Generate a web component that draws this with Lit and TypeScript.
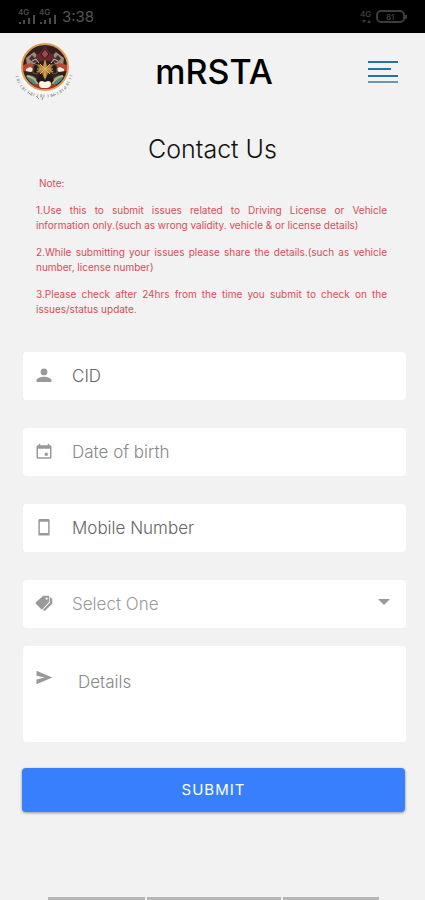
import { LitElement, html, css, svg } from "lit";
import { customElement } from "lit/decorators.js";

const person = svg`<path d="M12 11a4.500 4.500 0 1 0 0-9 4.500 4.500 0 0 0 0 9zm0 2c-3.500 0-10 1.600-10 5V20h20v-2c0-3.400-6.500-5-10-5z"/>`;
const calendar = svg`<path d="M17 1v2H7V1H5v2H4a2 2 0 0 0-2 2v14a2 2 0 0 0 2 2h16a2 2 0 0 0 2-2V5a2 2 0 0 0-2-2h-1V1zM4 7.500h16V19H4zM13 13v4h4v-4z" fill-rule="evenodd"/>`;
const phone = svg`<path d="M6 0h12a1.500 1.500 0 0 1 1.500 1.500v19A1.500 1.500 0 0 1 18 22H6a1.500 1.500 0 0 1-1.500-1.500v-19A1.500 1.500 0 0 1 6 0zm.500 3.500v15h11v-15z" fill-rule="evenodd"/>`;
const tags = svg`<path d="M11 1h6.500A1.500 1.500 0 0 1 19 2.500V9l-8.500 9.300a2 2 0 0 1-2.800 0L1.400 12a2 2 0 0 1 0-2.800zM15.500 3.200a1.500 1.500 0 1 0 0 3 1.500 1.500 0 0 0 0-3z" fill-rule="evenodd"/><path d="M20 3l3 2v6.500L13 21.300l-2.500-1.300L20 10z"/>`;
const send = svg`<path d="M2 1l21 9-21 9v-6.500l11-2.500L2 7.500z"/>`;

const icon = (shape: unknown) => html`<svg class="icon" viewBox="0 0 24 24" aria-hidden="true">${shape}</svg>`;

const signal = html`<svg class="signal" viewBox="0 0 19 18" aria-hidden="true">
  <text x="0" y="7">4G</text>
  <path d="M1 14h2v2H1zM5 12h2v4H5zM10 10h2v6h-2zM15 7h2v9h-2z" />
</svg>`;

const emblem = html`<svg class="emblem" viewBox="0 0 60 60" role="img" aria-label="Emblem">
  <path d="M3 34Q8 54 30 54T57 33" fill="none" stroke="#b4b4b2" stroke-width="3" stroke-dasharray="1 2 2 1 1 3" />
  <path d="M22 54l3 3m4-2l-1 3m-14-8l3 3m21 1l4-2m8-6l2 1" stroke="#999" />
  <circle cx="31" cy="27" r="25" fill="#fafafa" />
  <circle cx="31" cy="25" r="23" fill="#30211f" stroke="#df9a55" stroke-width="2" />
  <path d="M12 16l8-6 5 5-4 7-8 2zM50 16l-8-6-5 5 4 7 8 2z" fill="#a08a78" />
  <path d="M15 17l3-4 3 3 2-3 1 5-4 3zM47 17l-3-4-3 3-2-3-1 5 4 3z" fill="#443238" />
  <path d="M18 19l4-2 3 4M44 19l-4-2-3 4" fill="none" stroke="#d7c0a4" />
  <path d="M31 4l5 7 4 2-3 6H25l-3-6 4-2z" fill="#68282d" />
  <path d="M27 12l4-5 4 5-4 5z" fill="#a44743" stroke="#241b23" />
  <path d="M9 23l8-2 5 4-4 5-9-1zM53 23l-8-2-5 4 4 5 9-1z" fill="#b94734" />
  <path d="M12 27l4-2 4 2-3 3-5-1zM50 27l-4-2-4 2 3 3 5-1z" fill="#f1e7da" />
  <path d="M19 24l3-2 4 5-3 5-4-1zM43 24l-3-2-4 5 3 5 4-1z" fill="#211c1c" stroke="#765335" />
  <path d="M12 34q8-3 14 7l-2 3q-8-2-12-10zM50 34q-8-3-14 7l2 3q8-2 12-10z" fill="#4c8987" />
  <path d="M13 34q7 1 11 8M49 34q-7 1-11 8" fill="none" stroke="#c9b473" stroke-width="2" />
  <path d="M14 38q5 9 17 9t17-9q-2 6-9 4l-8-3-8 3q-7 2-9-4z" fill="#a7332a" />
  <path d="M22 38l5-6 4 3 4-3 5 6-3 4H25z" fill="#251716" />
  <path d="M31 17l2 7 6-2-3 5 4 3-6 1-3 7-3-7-6-1 4-3-3-5 6 2z" fill="#b78338" />
  <path d="M31 19v17M23 27h16M26 22l10 10M36 22L26 32" stroke="#dfb55c" />
  <path d="M25 42q0-3 3-3l3 1 3-1q3 0 3 3t-4 4h-4q-4 0-4-4z" fill="#fff8e7" />
</svg>`;

@customElement("app-root")
export class AppRoot extends LitElement {
  static styles = css`
    :host {
      display: flex;
      flex-direction: column;
      min-height: 100vh;
      background: #f2f2f2;
      color: #111;
      font-family: Inter, "Liberation Sans", sans-serif;
    }
    * { box-sizing: border-box; }
    .status {
      display: flex;
      align-items: center;
      height: 33px;
      padding: 0 16px 0 18px;
      background: #000;
      color: #555;
      font-size: 15px;
    }
    .signal { width: 19px; height: 18px; margin-right: 2px; fill: #4b4b4b; }
    .signal text { font-size: 8px; font-weight: 600; }
    .time { flex: 1; margin-left: 2px; }
    .power { width: 50px; height: 18px; fill: #3c3c3c; }
    .power text { font-size: 8px; font-weight: 600; }
    .top {
      display: grid;
      grid-template-columns: 60px 1fr 58px;
      align-items: center;
      height: 78px;
      padding: 0 13px 0 14px;
    }
    .emblem { width: 60px; height: 60px; }
    h1 { margin: 0; text-align: center; font-size: 34px; font-weight: 500; line-height: 44px; color: #000; }
    .menu { justify-self: center; padding: 0; border: 0; background: none; line-height: 0; }
    .menu svg { width: 30px; height: 24px; }
    h2 { margin: 22px 0 11px; text-align: center; font-size: 25px; font-weight: 300; line-height: 32px; color: #111; }
    .notes {
      display: flex;
      flex-direction: column;
      gap: 12px;
      margin: 0 38px 0 36px;
      color: #d94c56;
      font-size: 10px;
      line-height: 15px;
      text-align: justify;
    }
    .notes p { margin: 0; }
    .notes .lead { padding-left: 3px; }
    form { display: flex; flex-direction: column; gap: 28px; margin: 35px 19px 0 23px; }
    .field {
      display: flex;
      align-items: center;
      height: 48px;
      padding: 0 14px 0 12px;
      border-radius: 4px;
      background: #fff;
    }
    .icon { flex: none; width: 18px; height: 18px; fill: #999; margin-right: 19px; }
    input, select, textarea {
      flex: 1;
      min-width: 0;
      height: 100%;
      margin: 0;
      padding: 0;
      border: 0;
      outline: 0;
      appearance: none;
      background: transparent;
      color: #666;
      font: 300 17px/24px Inter, "Liberation Sans", sans-serif;
    }
    input::placeholder, textarea::placeholder { color: #666; opacity: 1; }
    .soft::placeholder { color: #888; }
    select { color: #999; }
    .arrow { flex: none; width: 16px; height: 8px; margin-bottom: 4px; fill: #999; }
    .group { display: flex; flex-direction: column; gap: 18px; }
    .area { align-items: flex-start; height: 96px; padding-top: 24px; }
    textarea { resize: none; padding-left: 6px; }
    .submit {
      height: 44px;
      margin: -2px 1px 0 -1px;
      border: 0;
      border-radius: 4px;
      background: #387ffe;
      box-shadow: 0 1px 3px #0006;
      color: #fff;
      font: 400 15px/24px Inter, "Liberation Sans", sans-serif;
      letter-spacing: 1px;
    }
    .tabs {
      display: grid;
      grid-template-columns: 97fr 134fr 96fr;
      gap: 2px;
      margin: auto 46px 0 48px;
    }
    .tabs span { height: 3px; background: #b5b5b5; }
  `;

  render() {
    return html`
      <div class="status">
        ${signal}${signal}
        <span class="time">3:38</span>
        <svg class="power" viewBox="0 0 50 18" aria-hidden="true">
          <text x="1" y="9">4G</text>
          <path d="M3 12h4l-2 3zM8 15h4l-2-3zM46 7h2v4h-2z" />
          <rect x="18" y="3" width="27" height="11" rx="4" fill="none" stroke="#3c3c3c" stroke-width="2" />
          <text x="27" y="12">81</text>
        </svg>
      </div>
      <header class="top">
        ${emblem}
        <h1>mRSTA</h1>
        <button class="menu" aria-label="Menu">
          <svg viewBox="0 0 30 24">
            <path d="M0 2h30M0 9h23M0 16h30" stroke="#2373a5" stroke-width="2" />
            <path d="M0 22h30" stroke="#6798b8" stroke-width="2" />
          </svg>
        </button>
      </header>
      <main>
        <h2>Contact Us</h2>
        <div class="notes">
          <p class="lead">Note:</p>
          <p>1.Use this to submit issues related to Driving License or Vehicle information only.(such as wrong validity. vehicle &amp; or license details)</p>
          <p>2.While submitting your issues please share the details.(such as vehicle number, license number)</p>
          <p>3.Please check after 24hrs from the time you submit to check on the issues/status update.</p>
        </div>
        <form @submit=${(e: Event) => e.preventDefault()}>
          <label class="field">${icon(person)}<input placeholder="CID" aria-label="CID" /></label>
          <label class="field">${icon(calendar)}<input class="soft" placeholder="Date of birth" aria-label="Date of birth" /></label>
          <label class="field">${icon(phone)}<input type="tel" placeholder="Mobile Number" aria-label="Mobile Number" /></label>
          <div class="group">
            <label class="field">${icon(tags)}<select aria-label="Select One"><option>Select One</option></select>
              <svg class="arrow" viewBox="0 0 16 8" aria-hidden="true"><path d="M2 1h12l-6 6z" /></svg>
            </label>
            <label class="field area">${icon(send)}<textarea class="soft" placeholder="Details" aria-label="Details"></textarea></label>
          </div>
          <button class="submit" type="submit">SUBMIT</button>
        </form>
      </main>
      <div class="tabs"><span></span><span></span><span></span></div>
    `;
  }
}
